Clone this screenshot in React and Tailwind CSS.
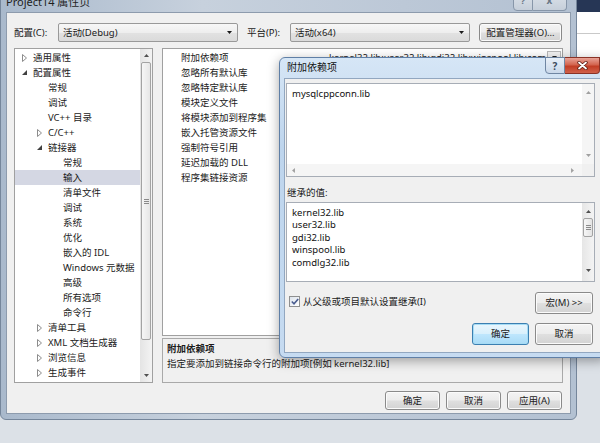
import React from 'react';
import clsx from 'clsx';

const tree = [
  { label: '通用属性', level: 0, arrow: 'closed' },
  { label: '配置属性', level: 0, arrow: 'open' },
  { label: '常规', level: 1 },
  { label: '调试', level: 1 },
  { label: 'VC++ 目录', level: 1 },
  { label: 'C/C++', level: 1, arrow: 'closed' },
  { label: '链接器', level: 1, arrow: 'open' },
  { label: '常规', level: 2 },
  { label: '输入', level: 2, selected: true },
  { label: '清单文件', level: 2 },
  { label: '调试', level: 2 },
  { label: '系统', level: 2 },
  { label: '优化', level: 2 },
  { label: '嵌入的 IDL', level: 2 },
  { label: 'Windows 元数据', level: 2 },
  { label: '高级', level: 2 },
  { label: '所有选项', level: 2 },
  { label: '命令行', level: 2 },
  { label: '清单工具', level: 1, arrow: 'closed' },
  { label: 'XML 文档生成器', level: 1, arrow: 'closed' },
  { label: '浏览信息', level: 1, arrow: 'closed' },
  { label: '生成事件', level: 1, arrow: 'closed' },
];

const indent = ['pl-[7px]', 'pl-[22px]', 'pl-[37px]'];

const linkerProps = [
  '附加依赖项',
  '忽略所有默认库',
  '忽略特定默认库',
  '模块定义文件',
  '将模块添加到程序集',
  '嵌入托管资源文件',
  '强制符号引用',
  '延迟加载的 DLL',
  '程序集链接资源',
];

const inherited = ['kernel32.lib', 'user32.lib', 'gdi32.lib', 'winspool.lib', 'comdlg32.lib'];

// little scroll / combo triangles
function Tri({ dir, color = '#505050' }) {
  const paths = {
    up: 'M0 4 L3.5 0 L7 4 Z',
    down: 'M0 0 L7 0 L3.5 4 Z',
    left: 'M4 0 L4 7 L0 3.5 Z',
    right: 'M0 0 L4 3.5 L0 7 Z',
  };
  const vertical = dir === 'up' || dir === 'down';
  return (
    <svg width={vertical ? 5 : 3} height={vertical ? 3 : 5} viewBox={vertical ? '0 0 7 4' : '0 0 4 7'}>
      <path d={paths[dir]} fill={color} />
    </svg>
  );
}

function TreeArrow({ open }) {
  if (open) {
    return (
      <svg width="5" height="5" viewBox="0 0 5 5">
        <path d="M5 0 L5 5 L0 5 Z" fill="#404040" />
      </svg>
    );
  }
  return (
    <svg width="5" height="8" viewBox="0 0 5 8">
      <path d="M0.5 0.5 L4.5 4 L0.5 7.5 Z" fill="#fff" stroke="#8c8c8c" />
    </svg>
  );
}

function Grip() {
  return (
    <div className="flex flex-col gap-[1px]">
      <div className="h-px w-[5px] bg-[#8a8a8a]" />
      <div className="h-px w-[5px] bg-[#8a8a8a]" />
      <div className="h-px w-[5px] bg-[#8a8a8a]" />
    </div>
  );
}

function Btn({ children, focused, className }) {
  return (
    <div
      className={clsx(
        'flex items-center justify-center rounded-[3px] border text-[#1b1b1b]',
        focused
          ? 'border-[#3c7fb1] bg-[linear-gradient(#eaf6fd,#d9f0fc_48%,#bee6fd_52%,#a9dbf6)] shadow-[inset_0_0_0_1px_#a6dcf5]'
          : 'border-[#8a8a8a] bg-[linear-gradient(#f4f4f4,#ececec_48%,#dfdfdf_52%,#d3d3d3)] shadow-[inset_0_0_0_1px_#fbfbfb]',
        className
      )}
    >
      {children}
    </div>
  );
}

function Combo({ value }) {
  return (
    <div className="flex h-[19px] w-[180px] items-center justify-between rounded-[2px] border border-[#999] bg-[linear-gradient(#f7f7f7,#eeeeee_50%,#e2e2e2_51%,#dadada)] pl-[4px] pr-[5px]">
      <span>{value}</span>
      <Tri dir="down" color="#1a1a1a" />
    </div>
  );
}

function MainWindow() {
  return (
    <div className="absolute left-0 top-[-12px] flex h-[432px] w-[577px] flex-col rounded-[6px] border border-[#75869b] bg-[linear-gradient(90deg,#a9b9cc,#c7d1dd_35%,#bcc8d7_70%,#b3c1d2)]">
      {/* title bar */}
      <div className="relative h-[23px] shrink-0">
        <div className="pl-[5px] pt-[6px] text-[11px] leading-[14px] text-[#1f1f1f]">Project14 属性页</div>
        <div className="absolute right-[9px] top-0 flex h-[22px]">
          <div className="flex w-[20px] items-center justify-center rounded-bl-[4px] border border-[#8796a9] bg-[linear-gradient(#dfe5ec,#c6cfda)] text-[9px] font-bold text-[#6a7786]">
            ?
          </div>
          <div className="flex w-[34px] items-center justify-center rounded-br-[4px] border border-l-0 border-[#8796a9] bg-[linear-gradient(#dfe5ec,#c6cfda)] text-[10px] font-bold text-[#6a7786]">
            x
          </div>
        </div>
      </div>

      {/* client */}
      <div className="mx-[5px] mb-[5px] flex flex-1 flex-col border border-[#8d9bad] bg-[#f0f0f0] px-[7px] pt-[10px]">
        <div className="flex h-[19px] items-center">
          <span className="w-[44px]">配置(C):</span>
          <Combo value="活动(Debug)" />
          <span className="ml-[9px] w-[43px]">平台(P):</span>
          <Combo value="活动(x64)" />
          <Btn className="ml-[9px] h-[19px] w-[83px]">配置管理器(O)...</Btn>
        </div>

        <div className="mt-[6px] flex gap-[9px]">
          {/* tree */}
          <div className="flex h-[335px] w-[139px] border border-[#a0a0a0] bg-white">
            <div className="flex-1 overflow-hidden pt-[1px]">
              {tree.map((item, i) => (
                <div
                  key={i}
                  className={clsx('flex h-[15px] items-center whitespace-nowrap', indent[item.level], item.selected && 'bg-[#d4d7e3]')}
                >
                  <span className="flex w-[11px] items-center">{item.arrow && <TreeArrow open={item.arrow === 'open'} />}</span>
                  <span>{item.label}</span>
                </div>
              ))}
            </div>
            <div className="flex w-[12px] flex-col items-center bg-[linear-gradient(90deg,#e4e4e4,#f3f3f3)]">
              <div className="flex h-[13px] items-center">
                <Tri dir="up" />
              </div>
              <div className="flex h-[278px] w-[10px] items-center justify-center rounded-[2px] border border-[#a3a3a3] bg-[linear-gradient(90deg,#f6f6f6,#e6e6e6)]">
                <Grip />
              </div>
              <div className="flex-1" />
              <div className="flex h-[13px] items-center">
                <Tri dir="down" />
              </div>
            </div>
          </div>

          {/* property grid + description */}
          <div className="flex w-[401px] flex-col">
            <div className="h-[288px] border border-[#a0a0a0] bg-white pt-[1px]">
              {linkerProps.map((p, i) => (
                <div key={p} className="flex h-[15px] items-center">
                  <div className="w-[166px] shrink-0 pl-[18px]">{p}</div>
                  {i === 0 && (
                    <div className="flex min-w-0 flex-1 items-center pr-[1px]">
                      <span className="flex-1 overflow-hidden whitespace-nowrap">
                        kernel32.lib;user32.lib;gdi32.lib;winspool.lib;comdlg32.lib;advapi32.lib;shell32.lib;ole32.lib
                      </span>
                      <div className="flex h-[14px] w-[14px] items-center justify-center border border-[#b8b8b8] bg-[#f2f2f2]">
                        <Tri dir="down" color="#222" />
                      </div>
                    </div>
                  )}
                </div>
              ))}
            </div>
            <div className="mt-[2px] h-[45px] border border-[#a9a9a9] bg-[#f0f0f0] px-[4px] pt-[2px] leading-[15px]">
              <div className="font-bold">附加依赖项</div>
              <div>指定要添加到链接命令行的附加项[例如 kernel32.lib]</div>
            </div>
          </div>
        </div>

        <div className="mt-[8px] flex justify-end gap-[6px] pr-px">
          <Btn className="h-[19px] w-[55px]">确定</Btn>
          <Btn className="h-[19px] w-[55px]">取消</Btn>
          <Btn className="h-[19px] w-[55px]">应用(A)</Btn>
        </div>
      </div>
    </div>
  );
}

function Dialog() {
  return (
    <div className="absolute left-[279px] top-[57px] flex h-[301px] w-[328px] flex-col rounded-[6px] border border-[#5f7fa6] bg-[linear-gradient(#d6e6f6,#bed5ed_30%,#c6dbf1)] shadow-[0_3px_12px_rgba(0,0,0,0.35)]">
      <div className="relative h-[20px] shrink-0">
        <div className="pl-[7px] pt-[3px] text-[10px] leading-[12px] text-[#111]">附加依赖项</div>
        <div className="absolute right-[6px] top-[-1px] flex h-[17px]">
          <div className="flex w-[20px] items-center justify-center rounded-bl-[4px] border border-[#6f86a3] bg-[linear-gradient(#e9f0f8,#c9d8ea)] text-[10px] font-bold text-[#3d4b5e]">
            ?
          </div>
          <div className="flex w-[35px] items-center justify-center rounded-br-[4px] border border-l-0 border-[#8a3226] bg-[linear-gradient(#e8a397,#d3644f_45%,#c23d25_55%,#d0614a)]">
            <svg width="11" height="9" viewBox="0 0 11 9">
              <path d="M2 1.5 L9 7.5 M9 1.5 L2 7.5" stroke="#5e1d14" strokeWidth="3.4" strokeLinecap="round" />
              <path d="M2 1.5 L9 7.5 M9 1.5 L2 7.5" stroke="#fff" strokeWidth="1.8" strokeLinecap="round" />
            </svg>
          </div>
        </div>
      </div>

      <div className="mx-[4px] mb-[4px] flex flex-1 flex-col border border-[#92a7c0] bg-[#f0f0f0] pl-px pt-[4px]">
        {/* edit box */}
        <div className="flex h-[94px] w-[309px] flex-col border border-[#a7adb6] bg-white">
          <div className="flex flex-1">
            <div className="flex-1 pl-[5px] pt-[4px] leading-[12px] text-[#111]">mysqlcppconn.lib</div>
            <div className="flex w-[12px] flex-col items-center justify-between bg-[#f5f5f5] py-[7px]">
              <Tri dir="up" color="#a0a0a0" />
              <Tri dir="down" color="#a0a0a0" />
            </div>
          </div>
          <div className="flex h-[12px]">
            <div className="flex flex-1 items-center justify-between bg-[#f5f5f5] pl-[5px] pr-[8px]">
              <Tri dir="left" color="#a0a0a0" />
              <Tri dir="right" color="#a0a0a0" />
            </div>
            <div className="w-[12px] bg-[#f0f0f0]" />
          </div>
        </div>

        <div className="mt-[10px] pl-px leading-[12px]">继承的值:</div>

        {/* inherited list */}
        <div className="mt-[3px] flex h-[80px] w-[309px] border border-[#a7adb6] bg-white">
          <div className="flex-1 overflow-hidden pl-[5px] pt-[4px] leading-[12.4px] text-[#111]">
            {inherited.map((lib) => (
              <div key={lib}>{lib}</div>
            ))}
          </div>
          <div className="flex w-[12px] flex-col items-center bg-[linear-gradient(90deg,#e6e6e6,#f4f4f4)] pb-[9px] pt-[7px]">
            <Tri dir="up" />
            <div className="mt-[5px] flex h-[19px] w-[10px] items-center justify-center rounded-[2px] border border-[#a3a3a3] bg-[linear-gradient(90deg,#f6f6f6,#e4e4e4)]">
              <Grip />
            </div>
            <div className="flex-1" />
            <Tri dir="down" />
          </div>
        </div>

        <div className="mt-[10px] flex h-[22px] w-[309px] justify-between pr-[2px]">
          <div className="mt-[4px] flex items-center self-start pl-[3px]">
            <div className="flex h-[11px] w-[11px] items-center justify-center border border-[#8e8f8f] bg-[linear-gradient(135deg,#dce3ec,#ffffff)]">
              <svg width="8" height="7" viewBox="0 0 8 7">
                <path d="M0.8 3.5 L3 5.8 L7.2 0.9" fill="none" stroke="#4a5d8f" strokeWidth="1.6" />
              </svg>
            </div>
            <span className="ml-[3px] leading-[11px]">从父级或项目默认设置继承(I)</span>
          </div>
          <Btn className="h-[22px] w-[58px]">宏(M) &gt;&gt;</Btn>
        </div>

        <div className="mt-[9px] flex w-[309px] justify-end gap-[6px] pr-[2px]">
          <Btn focused className="h-[22px] w-[57px]">确定</Btn>
          <Btn className="h-[22px] w-[58px]">取消</Btn>
        </div>
      </div>
    </div>
  );
}

export default function App() {
  return (
    <div className="relative h-[443px] w-[600px] overflow-hidden bg-[#dce1e7] font-['Noto_Sans','Noto_Sans_CJK_SC',sans-serif] text-[9.5px] leading-none text-[#1b1b1b]">
      {/* desktop behind the windows */}
      <div className="absolute right-0 top-0 h-[12px] w-[40px] bg-[#263655]" />
      <div className="absolute right-0 top-[12px] h-[45px] w-[30px] bg-white">
        <div className="mt-[21px] h-px bg-[#c9c9c9]" />
      </div>
      <MainWindow />
      <Dialog />
    </div>
  );
}
